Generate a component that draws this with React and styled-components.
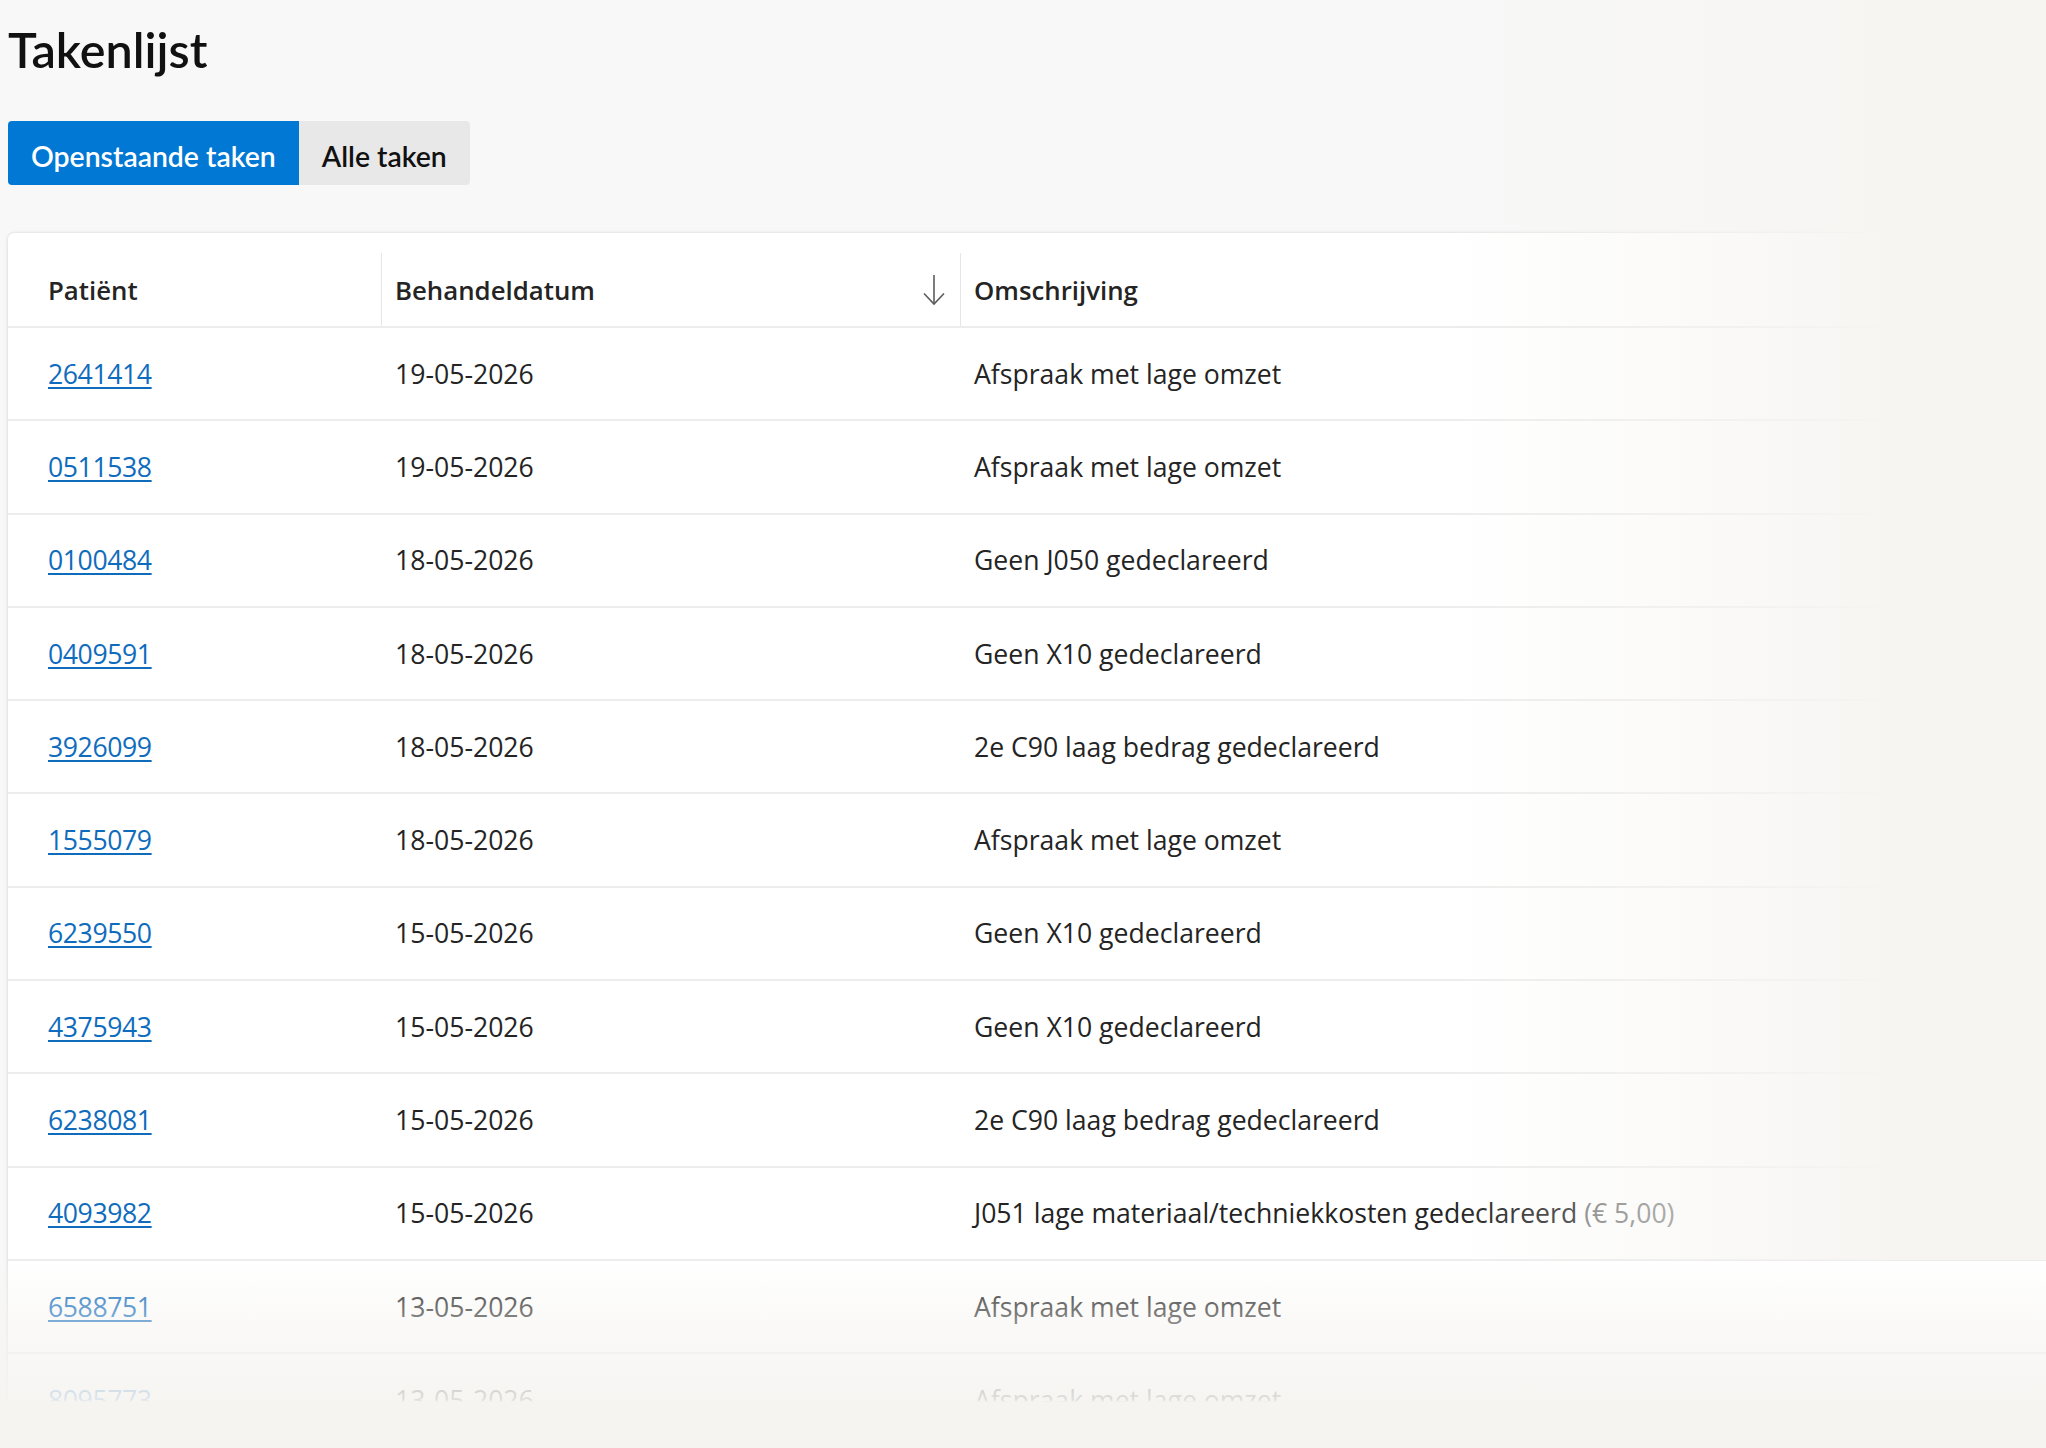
import React from "react";
import styled, { createGlobalStyle } from "styled-components";

const GlobalStyle = createGlobalStyle`
  html, body {
    margin: 0;
    padding: 0;
    background: #f8f8f8;
    font-family: "Open Sans", "Noto Sans", sans-serif;
    color: #242424;
  }
`;

const Page = styled.div`
  position: relative;
  height: 100vh;
  overflow: hidden;
  padding: 21px 8px 0 8px;
  box-sizing: border-box;
`;

const Title = styled.h1`
  margin: 0;
  font-family: Lato, "Open Sans", sans-serif;
  font-size: 48.5px;
  line-height: 56px;
  font-weight: 600;
  color: #111;
`;

const Tabs = styled.div`
  display: flex;
  margin-top: 44px;
`;

const Tab = styled.button`
  box-sizing: border-box;
  height: 64px;
  padding: 5px 23px 0;
  border: none;
  font-family: Lato, "Open Sans", sans-serif;
  font-size: 28.4px;
  font-weight: 600;
  cursor: pointer;
  background: ${(p) => (p.$active ? "#0078d4" : "#e8e8e8")};
  color: ${(p) => (p.$active ? "#ffffff" : "#111111")};
  &:first-child {
    border-radius: 4px 0 0 4px;
  }
  &:last-child {
    border-radius: 0 4px 4px 0;
  }
`;

const Card = styled.div`
  margin-top: 48px;
  width: calc(100% + 60px);
  background: #fff;
  border-radius: 6px 0 0 0;
  box-shadow: 0 0 3px rgba(0, 0, 0, 0.12), 0 1px 6px rgba(0, 0, 0, 0.05);
`;

const Row = styled.div`
  display: grid;
  grid-template-columns: 373px 579px 1fr;
  align-items: center;
  height: ${(p) => (p.$head ? "72px" : "91.3px")};
  padding-top: ${(p) => (p.$head ? "21px" : "0")};
  border-bottom: 2px solid ${(p) => (p.$head ? "#ececec" : "#ededed")};
  font-size: 26.6px;
`;

const HeadCell = styled.div`
  position: relative;
  height: 100%;
  display: flex;
  align-items: center;
  justify-content: space-between;
  padding: 0 15px 0 ${(p) => (p.$first ? "40px" : "14px")};
  font-size: 25.8px;
  font-weight: 600;
  color: #242424;
  &::before {
    content: "";
    display: ${(p) => (p.$first ? "none" : "block")};
    position: absolute;
    left: 0;
    top: -1px;
    bottom: 0;
    width: 1px;
    background: #e6e6e6;
  }
`;

const Cell = styled.div`
  padding-left: ${(p) => (p.$first ? "40px" : "14px")};
  white-space: nowrap;
`;

const PatientLink = styled.a`
  color: #0f6cbd;
  text-decoration: underline;
  text-underline-offset: 3px;
  letter-spacing: -0.4px;
`;

const Muted = styled.span`
  color: #707070;
`;

const FadeRight = styled.div`
  position: absolute;
  top: 0;
  right: 0;
  width: 596px;
  height: 1260px;
  pointer-events: none;
  background: linear-gradient(
    to right,
    rgba(246, 245, 242, 0) 0%,
    rgba(246, 245, 242, 0.55) 45%,
    rgba(246, 245, 242, 0.96) 72%,
    #f6f5f2 73%,
    #f6f5f2 100%
  );
`;

const FadeBottom = styled.div`
  position: absolute;
  top: 1260px;
  left: 0;
  right: 0;
  bottom: 0;
  pointer-events: none;
  background: linear-gradient(
    to bottom,
    rgba(245, 244, 241, 0) 0px,
    rgba(245, 244, 241, 0.55) 70px,
    rgba(245, 244, 241, 0.9) 140px,
    #f5f4f1 142px,
    #f5f4f1 100%
  );
`;

const SortArrow = () => (
  <svg width="22" height="32" viewBox="0 0 22 32" fill="none">
    <path d="M11 1v29" stroke="#5c5c5c" strokeWidth="1.6" />
    <path d="M1 19.5L11 30l10-10.5" stroke="#5c5c5c" strokeWidth="1.6" />
  </svg>
);

const rows = [
  ["2641414", "19-05-2026", "Afspraak met lage omzet"],
  ["0511538", "19-05-2026", "Afspraak met lage omzet"],
  ["0100484", "18-05-2026", "Geen J050 gedeclareerd"],
  ["0409591", "18-05-2026", "Geen X10 gedeclareerd"],
  ["3926099", "18-05-2026", "2e C90 laag bedrag gedeclareerd"],
  ["1555079", "18-05-2026", "Afspraak met lage omzet"],
  ["6239550", "15-05-2026", "Geen X10 gedeclareerd"],
  ["4375943", "15-05-2026", "Geen X10 gedeclareerd"],
  ["6238081", "15-05-2026", "2e C90 laag bedrag gedeclareerd"],
  ["4093982", "15-05-2026", "J051 lage materiaal/techniekkosten gedeclareerd", "(€ 5,00)"],
  ["6588751", "13-05-2026", "Afspraak met lage omzet"],
  ["8095773", "13-05-2026", "Afspraak met lage omzet"],
];

export default function App() {
  return (
    <>
      <GlobalStyle />
      <Page>
        <Title>Takenlijst</Title>
        <Tabs>
          <Tab $active>Openstaande taken</Tab>
          <Tab>Alle taken</Tab>
        </Tabs>
        <Card>
          <Row $head>
            <HeadCell $first>Patiënt</HeadCell>
            <HeadCell>
              Behandeldatum
              <SortArrow />
            </HeadCell>
            <HeadCell>Omschrijving</HeadCell>
          </Row>
          {rows.map((r) => (
            <Row key={r[0]}>
              <Cell $first>
                <PatientLink href="#">{r[0]}</PatientLink>
              </Cell>
              <Cell>{r[1]}</Cell>
              <Cell>
                {r[2]}
                {r[3] && <Muted> {r[3]}</Muted>}
              </Cell>
            </Row>
          ))}
        </Card>
        <FadeRight />
        <FadeBottom />
      </Page>
    </>
  );
}
